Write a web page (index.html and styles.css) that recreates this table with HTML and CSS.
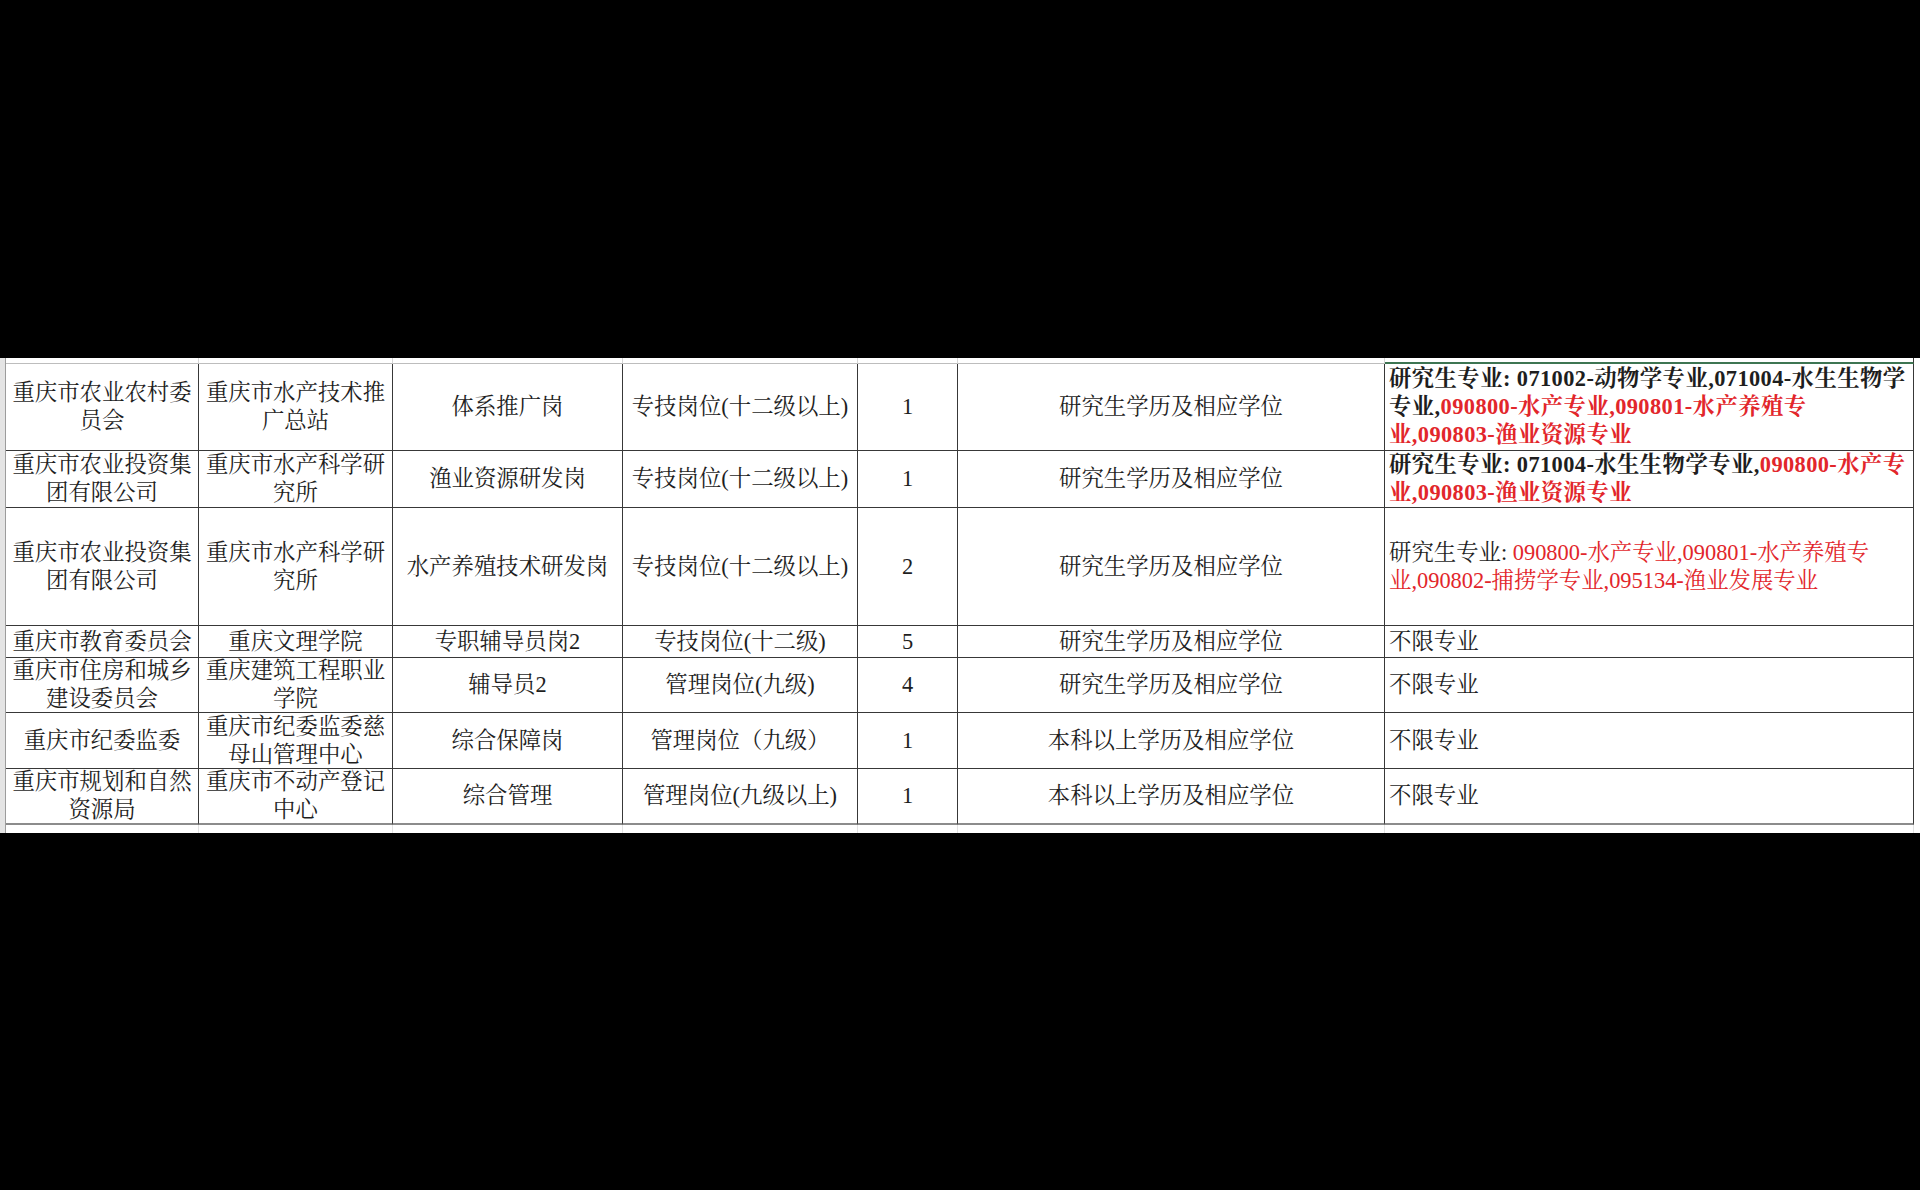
FILE: index.html
```html
<!DOCTYPE html>
<html lang="zh-CN">
<head>
<meta charset="utf-8">
<title>岗位表</title>
<link rel="stylesheet" href="styles.css">
</head>
<body>
<div class="screen">
  <div class="sheet">
    <div class="rowhdr"></div>
    <div class="grid">
      <div class="c strip"></div><div class="c strip"></div><div class="c strip"></div><div class="c strip"></div><div class="c strip"></div><div class="c strip"></div><div class="c strip sel"></div>

      <div class="c">重庆市农业农村委员会</div>
      <div class="c">重庆市水产技术推广总站</div>
      <div class="c">体系推广岗</div>
      <div class="c">专技岗位(十二级以上)</div>
      <div class="c">1</div>
      <div class="c">研究生学历及相应学位</div>
      <div class="c major b"><span>研究生专业: 071002-动物学专业,071004-水生生物学<br>专业,<span class="red">090800-水产专业,090801-水产养殖专<br>业,090803-渔业资源专业</span></span></div>

      <div class="c">重庆市农业投资集团有限公司</div>
      <div class="c">重庆市水产科学研究所</div>
      <div class="c">渔业资源研发岗</div>
      <div class="c">专技岗位(十二级以上)</div>
      <div class="c">1</div>
      <div class="c">研究生学历及相应学位</div>
      <div class="c major b"><span>研究生专业: 071004-水生生物学专业,<span class="red">090800-水产专<br>业,090803-渔业资源专业</span></span></div>

      <div class="c">重庆市农业投资集团有限公司</div>
      <div class="c">重庆市水产科学研究所</div>
      <div class="c">水产养殖技术研发岗</div>
      <div class="c">专技岗位(十二级以上)</div>
      <div class="c">2</div>
      <div class="c">研究生学历及相应学位</div>
      <div class="c major"><span>研究生专业: <span class="red">090800-水产专业,090801-水产养殖专<br>业,090802-捕捞学专业,095134-渔业发展专业</span></span></div>

      <div class="c">重庆市教育委员会</div>
      <div class="c">重庆文理学院</div>
      <div class="c">专职辅导员岗2</div>
      <div class="c">专技岗位(十二级)</div>
      <div class="c">5</div>
      <div class="c">研究生学历及相应学位</div>
      <div class="c major">不限专业</div>

      <div class="c">重庆市住房和城乡建设委员会</div>
      <div class="c">重庆建筑工程职业学院</div>
      <div class="c">辅导员2</div>
      <div class="c">管理岗位(九级)</div>
      <div class="c">4</div>
      <div class="c">研究生学历及相应学位</div>
      <div class="c major">不限专业</div>

      <div class="c">重庆市纪委监委</div>
      <div class="c">重庆市纪委监委慈母山管理中心</div>
      <div class="c">综合保障岗</div>
      <div class="c">管理岗位（九级）</div>
      <div class="c">1</div>
      <div class="c">本科以上学历及相应学位</div>
      <div class="c major">不限专业</div>

      <div class="c last">重庆市规划和自然资源局</div>
      <div class="c last">重庆市不动产登记中心</div>
      <div class="c last">综合管理</div>
      <div class="c last">管理岗位(九级以上)</div>
      <div class="c last">1</div>
      <div class="c last">本科以上学历及相应学位</div>
      <div class="c major last">不限专业</div>

      <div class="c strip2"></div><div class="c strip2"></div><div class="c strip2"></div><div class="c strip2"></div><div class="c strip2"></div><div class="c strip2"></div><div class="c strip2"></div>
    </div>
    <div class="rest"></div>
  </div>
</div>
</body>
</html>
```

FILE: styles.css
```css
html, body {
  margin: 0;
  padding: 0;
  background: #000;
}

.screen {
  width: 1920px;
  height: 1190px;
  padding-top: 358px;
  box-sizing: border-box;
  background: #000;
}

.sheet {
  display: flex;
  height: 475px;
  background: #fff;
}

.rowhdr {
  width: 6px;
  flex: none;
  background: #e4e4e4;
  border-right: 1px solid #9c9c9c;
  box-sizing: border-box;
}

.rest {
  flex: 1;
  background: #fff;
}

.grid {
  display: grid;
  grid-template-columns: 193px 194px 230px 235px 100px 427px 529px;
  grid-template-rows: 6px 87px 57px 118px 32px 55px 56px 56px 8px;
  font-family: "Liberation Serif", "Noto Serif CJK SC", "Noto Sans CJK SC", serif;
  font-size: 22.4px;
  line-height: 28px;
  color: #1e1e1e;
}

.c {
  box-sizing: border-box;
  border-right: 1px solid #383838;
  border-bottom: 1px solid #383838;
  display: flex;
  align-items: center;
  justify-content: center;
  text-align: center;
  padding: 0 4px;
  overflow: hidden;
}

.c.strip {
  border-right: 1px solid #d6d6d6;
  border-bottom: 1px solid #bdbdbd;
  padding: 0;
}

.c.strip.sel {
  border-bottom: 2px solid #3d7552;
  border-right: 1px solid #383838;
}

.c.strip2 {
  border-right: 1px solid #e2e2e2;
  border-bottom: none;
  padding: 0;
}

.c.last {
  border-bottom: 2px solid #8c8c8c;
}

.c.major {
  justify-content: flex-start;
  text-align: left;
  white-space: nowrap;
  padding: 0 0 0 4px;
}

.c.b {
  font-weight: 700;
  letter-spacing: 0.4px;
}

.red {
  color: #e2262b;
}
```
